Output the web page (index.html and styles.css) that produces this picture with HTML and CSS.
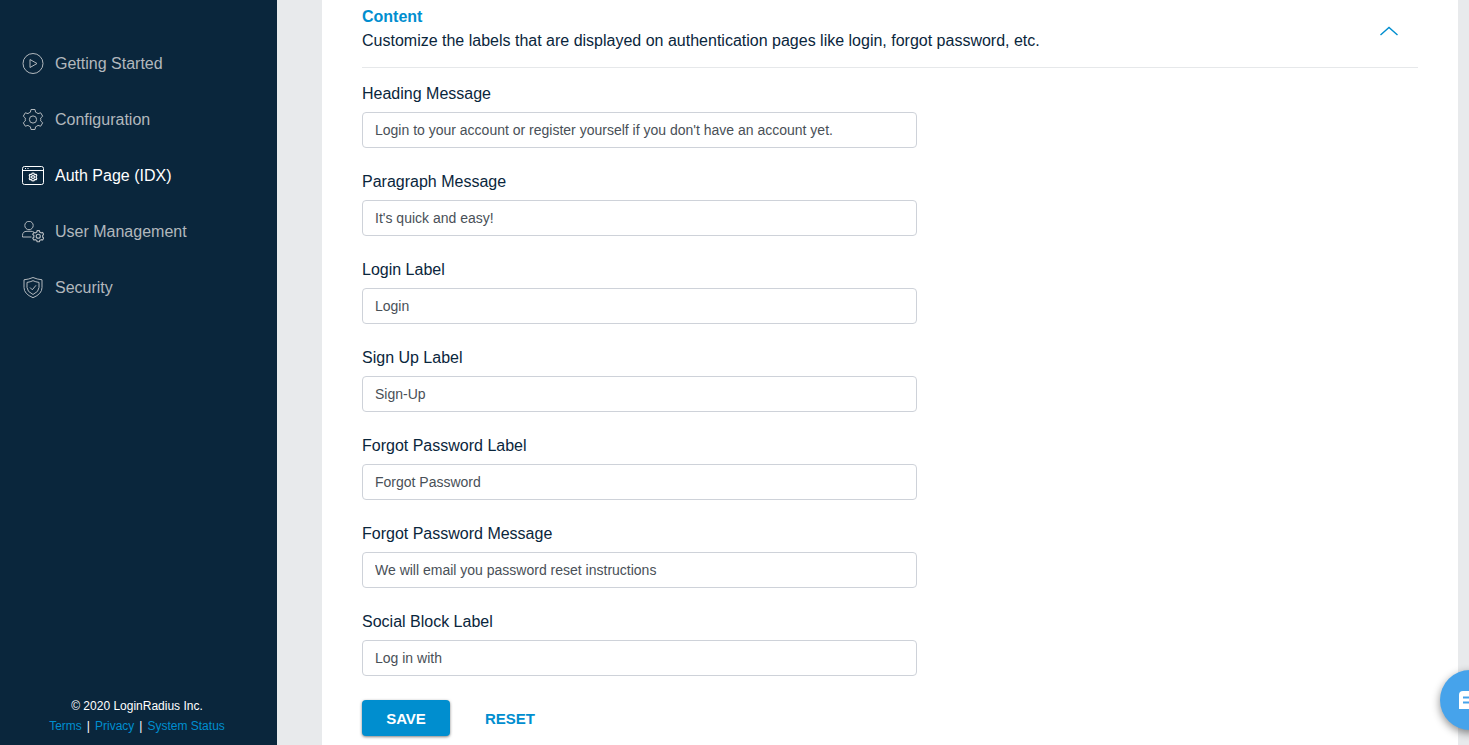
FILE: index.html
```html
<!DOCTYPE html>
<html lang="en">
<head>
<meta charset="utf-8">
<title>Auth Page (IDX)</title>
<link rel="stylesheet" href="styles.css">
</head>
<body>
<svg class="sprite" aria-hidden="true">
  <symbol id="gear" viewBox="-11 -11 22 22">
    <path d="M-2-10H2L2.6-7.3Q3.9-6.8 5-5.9L7.7-6.7 9.7-3.3 7.6-1.4Q7.9 0 7.6 1.4L9.7 3.3 7.7 6.7 5 5.9Q3.9 6.8 2.6 7.3L2 10H-2L-2.6 7.3Q-3.9 6.8-5 5.9L-7.7 6.7-9.7 3.3-7.6 1.4Q-7.9 0-7.6-1.4L-9.7-3.3-7.7-6.7-5-5.9Q-3.9-6.8-2.6-7.3Z"/>
    <circle r="3.6"/>
  </symbol>
</svg>
<div class="layout">
  <aside class="sidebar">
    <nav class="nav">
      <a class="nav-item" href="#">
        <svg class="icon" viewBox="0 0 22 22"><circle cx="11" cy="10.5" r="10"/><path d="M8 6.5V14.5L15 10.5Z"/></svg>
        Getting Started
      </a>
      <a class="nav-item" href="#">
        <svg class="icon" viewBox="0 0 22 22"><use href="#gear" y="-.5" width="22" height="22"/></svg>
        Configuration
      </a>
      <a class="nav-item active" href="#" aria-current="page">
        <svg class="icon" viewBox="0 0 22 22"><rect x=".5" y="1.5" width="21" height="18" rx="2"/><path d="M.5 5.5H21.5M3 3.5H4M5.5 3.5H6.5"/><use class="small-gear bold" href="#gear" x="6.5" y="7.5" width="9" height="9"/></svg>
        Auth Page (IDX)
      </a>
      <a class="nav-item" href="#">
        <svg class="icon" viewBox="0 0 22 22"><circle cx="7" cy="4.5" r="4.2"/><path d="M9.5 16H.5V14.5Q.5 10.3 5 10.3H9Q10.7 10.3 11.8 11"/><use class="small-gear" href="#gear" x="10" y="9" width="12.5" height="12.5"/></svg>
        User Management
      </a>
      <a class="nav-item" href="#">
        <svg class="icon" viewBox="0 0 22 22"><path d="M11 .5Q7 2.3 2 2.8V10.5Q2 17 11 20.7Q20 17 20 10.5V2.8Q15 2.3 11 .5Z"/><path d="M11 3.7Q8.3 5 5 5.4V10.5Q5 14.7 11 17.5Q17 14.7 17 10.5V5.4Q13.7 5 11 3.7Z"/><path d="M8 10.5 10.3 12.8 14 8.3"/></svg>
        Security
      </a>
    </nav>
    <footer class="legal">
      <div>© 2020 LoginRadius Inc.</div>
      <div class="legal-links"><a href="#">Terms</a><span>|</span><a href="#">Privacy</a><span>|</span><a href="#">System Status</a></div>
    </footer>
  </aside>
  <main class="main">
    <section class="card">
      <header class="card-header">
        <div>
          <h2 class="title">Content</h2>
          <p class="description">Customize the labels that are displayed on authentication pages like login, forgot password, etc.</p>
        </div>
        <button class="collapse" type="button" aria-label="Collapse"><svg viewBox="0 0 20 12"><path d="M1.5 10 10 2.5 18.5 10"/></svg></button>
      </header>
      <form class="form">
        <div class="field"><label for="heading">Heading Message</label><input id="heading" type="text" value="Login to your account or register yourself if you don't have an account yet."></div>
        <div class="field"><label for="paragraph">Paragraph Message</label><input id="paragraph" type="text" value="It's quick and easy!"></div>
        <div class="field"><label for="login">Login Label</label><input id="login" type="text" value="Login"></div>
        <div class="field"><label for="signup">Sign Up Label</label><input id="signup" type="text" value="Sign-Up"></div>
        <div class="field"><label for="forgot">Forgot Password Label</label><input id="forgot" type="text" value="Forgot Password"></div>
        <div class="field"><label for="forgot-message">Forgot Password Message</label><input id="forgot-message" type="text" value="We will email you password reset instructions"></div>
        <div class="field"><label for="social">Social Block Label</label><input id="social" type="text" value="Log in with"></div>
        <div class="actions"><button class="save" type="button">SAVE</button><button class="reset" type="button">RESET</button></div>
      </form>
    </section>
  </main>
</div>
<button class="chat" type="button" aria-label="Open chat">
  <svg viewBox="0 0 24 24"><path class="bubble" d="M5 3H19Q23 3 23 7V21H1V7Q1 3 5 3Z"/><path class="lines" d="M5 9.5H19M5 14.5H19"/></svg>
</button>
</body>
</html>
```

FILE: styles.css
```css
* { box-sizing: border-box; }
body {
  margin: 0;
  overflow: hidden;
  background: #e8eaec;
  color: #0a263c;
  font: 16px/24px "Liberation Sans", Arial, sans-serif;
}
a { color: #008ecf; text-decoration: none; }
button, input { font-family: inherit; }
.sprite { position: absolute; width: 0; height: 0; }
.layout { display: flex; min-height: 100vh; }
.sidebar {
  display: flex;
  flex-direction: column;
  justify-content: space-between;
  flex: 0 0 277px;
  padding: 36px 0 9px;
  background: #0a263c;
}
.nav { display: flex; flex-direction: column; }
.nav-item {
  display: flex;
  align-items: center;
  gap: 11px;
  height: 56px;
  padding-left: 22px;
  color: #b2b8bd;
}
.nav-item.active { color: #fff; }
.icon {
  width: 22px;
  height: 22px;
  fill: none;
  stroke: currentColor;
  stroke-width: 1;
  stroke-linejoin: round;
}
.small-gear { stroke-width: 2; }
.bold { stroke-width: 3; }
.legal {
  padding-right: 3px;
  color: #fff;
  font-size: 12px;
  line-height: 20px;
  text-align: center;
}
.legal-links { display: flex; justify-content: center; gap: 5px; }
.main { flex: 1; padding: 0 11px 0 45px; }
.card { min-height: 100%; padding: 5px 40px 8px; background: #fff; }
.card-header {
  display: flex;
  justify-content: space-between;
  align-items: center;
  padding: 0 19px 14px 0;
  border-bottom: 1px solid #e6e8ea;
}
.title, .description { margin: 0; }
.title { color: #008ecf; font-size: 16px; }
.collapse { padding: 4px 0 0; border: 0; background: none; }
.collapse svg {
  display: block;
  width: 20px;
  height: 12px;
  fill: none;
  stroke: #008ecf;
  stroke-width: 1.4;
}
.form {
  display: flex;
  flex-direction: column;
  gap: 22px;
  max-width: 555px;
  padding-top: 14px;
}
.field { display: flex; flex-direction: column; gap: 6px; }
.field input {
  width: 100%;
  height: 36px;
  padding: 0 12px;
  border: 1px solid #ced2d9;
  border-radius: 4px;
  background: #fff;
  color: #495057;
  font-size: 14px;
}
.actions { display: flex; gap: 35px; padding-top: 2px; }
.actions button {
  height: 36px;
  border: 0;
  border-radius: 4px;
  font-size: 15px;
  font-weight: bold;
}
.save {
  width: 88px;
  background: #008ecf;
  color: #fff;
  box-shadow: 0 1px 3px rgba(0, 0, 0, .5);
}
.actions .reset { padding: 0; background: none; color: #008ecf; }
.chat {
  position: fixed;
  right: -31px;
  bottom: 15px;
  display: grid;
  place-items: center;
  width: 60px;
  height: 60px;
  padding: 0;
  border: 0;
  border-radius: 50%;
  background: #46a3eb;
  box-shadow: 0 3px 8px rgba(0, 0, 0, .45);
}
.chat svg { width: 24px; height: 24px; }
.bubble { fill: #fff; }
.lines { fill: none; stroke: #46a3eb; stroke-width: 2; }
```
